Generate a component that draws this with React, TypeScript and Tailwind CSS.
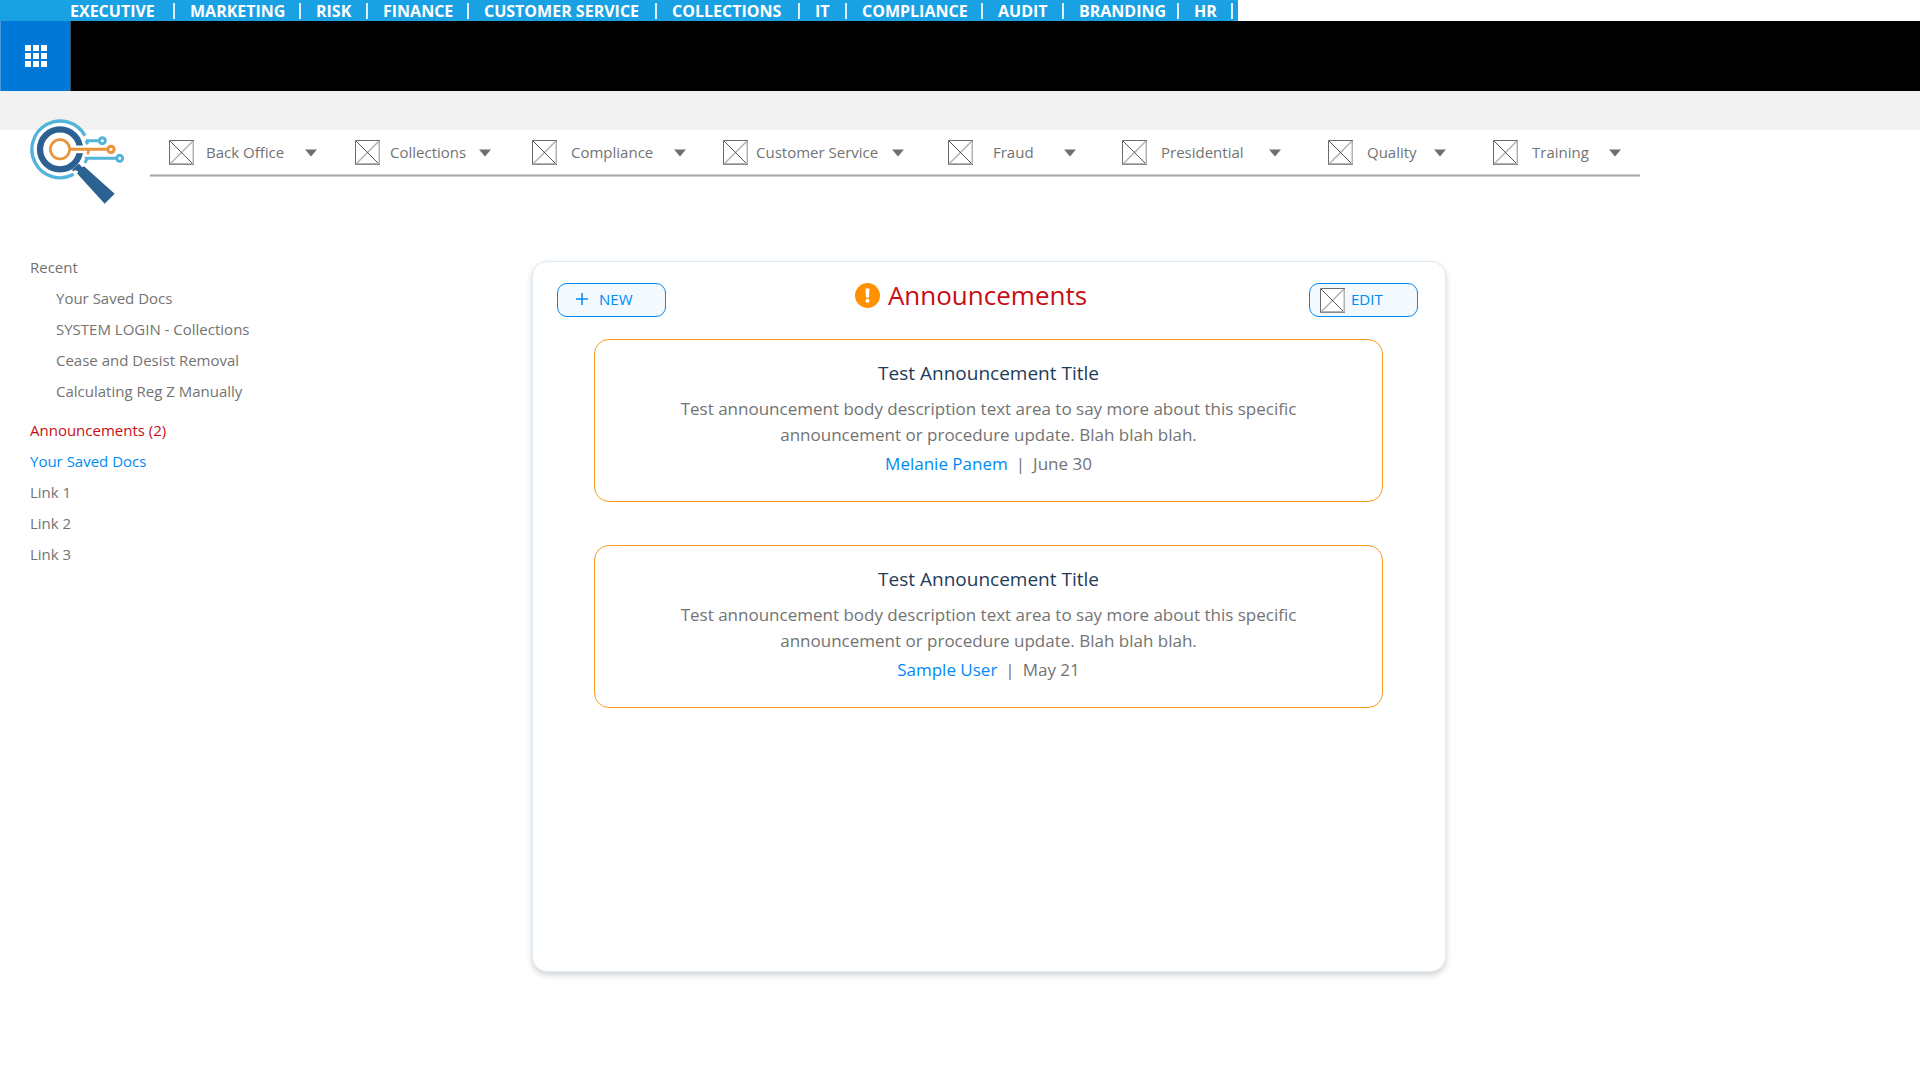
const departments = [
  { name: "EXECUTIVE", cell: "w-[103px]" },
  { name: "MARKETING", cell: "w-[109px]" },
  { name: "RISK", cell: "w-[50px]" },
  { name: "FINANCE", cell: "w-[84px]" },
  { name: "CUSTOMER SERVICE", cell: "w-[171px]" },
  { name: "COLLECTIONS", cell: "w-[126px]" },
  { name: "IT", cell: "w-[30px]" },
  { name: "COMPLIANCE", cell: "w-[119px]" },
  { name: "AUDIT", cell: "w-[64px]" },
  { name: "BRANDING", cell: "w-[98px]" },
  { name: "HR", cell: "w-[37px]" },
];

const menus = [
  { name: "Back Office", cell: "w-[111px] pl-3" },
  { name: "Collections", cell: "w-[99px] pl-2.5" },
  { name: "Compliance", cell: "w-[117px] pl-3.5" },
  { name: "Customer Service", cell: "w-[144px] pl-2" },
  { name: "Fraud", cell: "w-[91px] pl-5" },
  { name: "Presidential", cell: "w-[122px] pl-3.5" },
  { name: "Quality", cell: "w-[81px] pl-3.5" },
  { name: "Training", cell: "w-[91px] pl-3.5" },
];

const recent = [
  "Your Saved Docs",
  "SYSTEM LOGIN - Collections",
  "Cease and Desist Removal",
  "Calculating Reg Z Manually",
];

const links = [
  { name: "Announcements (2)", color: "text-[#c70d14]" },
  { name: "Your Saved Docs", color: "text-[#008af5]" },
  { name: "Link 1", color: "" },
  { name: "Link 2", color: "" },
  { name: "Link 3", color: "" },
];

const announcements = [
  { author: "Melanie Panem", date: "June 30" },
  { author: "Sample User", date: "May 21" },
];

function PlaceholderIcon() {
  return (
    <svg width="25" height="25" viewBox="0 0 25 25" className="shrink-0" aria-hidden="true">
      <rect width="25" height="25" fill="#fff" />
      <path d="M1 24L24 1" stroke="#b0b0b0" strokeWidth="1.4" />
      <path d="M1 1L24 24" stroke="#555" strokeWidth="1" />
      <path d="M24.5 1V24M1 24H25" stroke="#b3b3b3" strokeWidth="2" />
      <path d="M0.5 25V0.5H25" fill="none" stroke="#6b6b6b" />
      <path d="M0 24.5H25" stroke="#8a8a8a" />
    </svg>
  );
}

function Caret() {
  return (
    <svg width="13" height="8" viewBox="0 0 13 8" className="shrink-0" aria-hidden="true">
      <path d="M0 0.5H12L6 7.5Z" fill="#6e6e6e" />
    </svg>
  );
}

function Logo() {
  return (
    <svg
      viewBox="60 57 294 258"
      className="-mt-[11px] ml-[30px] h-[86px] w-[98px] shrink-0"
      fill="none"
      role="img"
      aria-label="Home"
    >
      <circle cx="150" cy="148" r="86" fill="#fff" />
      <path d="M225 107A85 85 0 1 0 191 223" stroke="#52b4db" strokeWidth="10" />
      <circle cx="150" cy="148" r="60" stroke="#2b6291" strokeWidth="19" />
      <path d="M188 208L205 192L217 202L222 199L314 281L284 311L202 221L204 214Z" fill="#2b6291" />
      <path d="M188 212L210 194" stroke="#2b6291" strokeWidth="6" />
      <path d="M196 148H222" stroke="#fff" strokeWidth="23" />
      <path d="M180 148H294" stroke="#ea943a" strokeWidth="9" />
      <circle cx="150" cy="148" r="29" stroke="#ea943a" strokeWidth="8" />
      <path d="M235 148V156L233 163" stroke="#ea943a" strokeWidth="8" />
      <circle cx="303" cy="148" r="9.500" stroke="#ea943a" strokeWidth="9" />
      <path d="M228 122H266M228 122L233 133" stroke="#52b4db" strokeWidth="9" />
      <circle cx="277" cy="122" r="9" stroke="#52b4db" strokeWidth="9" />
      <path d="M225 189L229 180V175H318" stroke="#52b4db" strokeWidth="9" />
      <circle cx="329" cy="175" r="9" stroke="#52b4db" strokeWidth="9" />
      <path
        d="M318 131A22 22 0 0 1 326 148M334 154A22 22 0 1 1 322 195"
        stroke="#e3e3e3"
        strokeWidth="2"
        strokeDasharray="5 3"
      />
    </svg>
  );
}

export default function App() {
  return (
    <div className="min-h-screen bg-white font-['Open_Sans','Noto_Sans',sans-serif] text-[15px] text-[#737373]">
      <nav
        aria-label="Departments"
        className="flex h-[21px] w-fit items-center bg-[#1aa1e3] pr-1 pl-[70px] text-base leading-5 font-bold text-white"
      >
        {departments.map((d) => (
          <span key={d.name} className="group flex">
            <a href="#" className={`whitespace-nowrap ${d.cell}`}>
              {d.name}
            </a>
            <span className="flex w-[17px] items-center group-last:w-[3px]" aria-hidden="true">
              <span className="h-4 w-0.5 bg-white/85" />
            </span>
          </span>
        ))}
      </nav>

      <div className="flex h-[70px] bg-black">
        <button
          type="button"
          aria-label="App launcher"
          className="flex w-[71px] items-center justify-center border-r border-l border-r-[#33526e] border-l-[#4a9be2] bg-[#0078d7]"
        >
          <span className="grid grid-cols-3 gap-0.5">
            {Array.from({ length: 9 }, (_, i) => (
              <span key={i} className="size-1.5 bg-white" />
            ))}
          </span>
        </button>
      </div>
      <div className="h-[39px] bg-[#f2f2f2]" />

      <header className="flex items-start">
        <Logo />
        <nav aria-label="Sections" className="mr-[280px] ml-[22px] flex-1">
          <div className="grid h-11 grid-cols-[186fr_177fr_191fr_225fr_174fr_206fr_165fr_147fr] pl-[19px]">
            {menus.map((m) => (
              <button key={m.name} type="button" className="flex items-center pt-px text-left">
                <PlaceholderIcon />
                <span className={`shrink-0 whitespace-nowrap ${m.cell}`}>{m.name}</span>
                <Caret />
              </button>
            ))}
          </div>
          <div className="h-[3px] border-y border-[#cfcfcf] bg-[#a6a6a6]" />
        </nav>
      </header>

      <div className="grid grid-cols-[532fr_914fr_474fr] items-start pb-10">
        <aside className="mt-[47px] pl-[30px] leading-[31px]">
          <p>Recent</p>
          <ul className="mb-2 pl-[26px]">
            {recent.map((r) => (
              <li key={r}>
                <a href="#">{r}</a>
              </li>
            ))}
          </ul>
          <ul>
            {links.map((l) => (
              <li key={l.name}>
                <a href="#" className={l.color}>
                  {l.name}
                </a>
              </li>
            ))}
          </ul>
        </aside>

        <main className="mt-14 min-h-[711px] rounded-[15px] border border-[#dcebf5] bg-white pt-[21px] pr-[27px] pl-6 shadow-[0_3px_6px_rgba(0,0,0,0.18)]">
          <div className="grid grid-cols-[1fr_auto_1fr] items-start">
            <div className="flex items-start justify-between">
              <button
                type="button"
                className="flex h-[34px] w-[109px] items-center gap-[11px] rounded-[10px] border border-[#008af5] bg-[#f2f9ff] pb-0.5 pl-[18px] text-[#008af5]"
              >
                <svg width="12" height="12" viewBox="0 0 12 12" aria-hidden="true">
                  <path d="M6 0V12M0 6H12" stroke="#008af5" strokeWidth="1.500" />
                </svg>
                NEW
              </button>
              <svg width="25" height="25" viewBox="0 0 25 25" className="mr-2" aria-hidden="true">
                <circle cx="12.500" cy="12.500" r="12.500" fill="#ff9100" />
                <path d="M10.500 5.500H14.500L14 14.500H11Z" fill="#fff" />
                <circle cx="12.500" cy="17.800" r="2" fill="#fff" />
              </svg>
            </div>
            <h1 className="text-[26px] leading-6 text-[#c70d14]">Announcements</h1>
            <button
              type="button"
              className="flex h-[34px] w-[109px] items-center gap-1.5 justify-self-end rounded-[10px] border border-[#008af5] bg-[#f2f9ff] pl-2.5 text-[#008af5]"
            >
              <PlaceholderIcon />
              <span className="pb-0.5">EDIT</span>
            </button>
          </div>

          <div className="mt-[22px] mr-[35px] ml-[37px] flex flex-col gap-[43px]">
            {announcements.map((a) => (
              <article
                key={a.author}
                className="rounded-[15px] border border-[#f99a1c] px-20 pt-[19px] pb-6 text-center text-[17px] leading-[26px]"
              >
                <h2 className="text-[19px] leading-7 text-[#1f3b58]">Test Announcement Title</h2>
                <p className="mt-[9px]">
                  Test announcement body description text area to say more about this specific
                  announcement or procedure update. Blah blah blah.
                </p>
                <p className="mt-[3px]">
                  <a href="#" className="text-[#008af5]">
                    {a.author}
                  </a>
                  <span className="px-2">|</span>
                  {a.date}
                </p>
              </article>
            ))}
          </div>
        </main>
      </div>
    </div>
  );
}
